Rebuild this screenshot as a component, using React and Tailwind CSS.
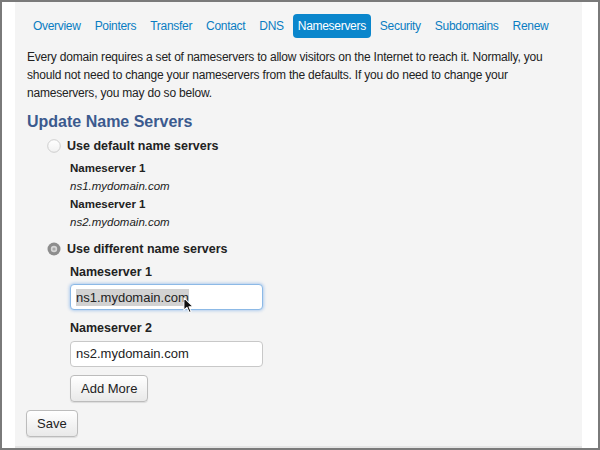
import { useState } from "react";

const tabs = [
  "Overview",
  "Pointers",
  "Transfer",
  "Contact",
  "DNS",
  "Nameservers",
  "Security",
  "Subdomains",
  "Renew",
];

const Radio = ({ checked }) =>
  checked ? (
    <svg width="14" height="14" viewBox="0 0 14 14">
      <circle cx="7" cy="7" r="6.5" fill="#8d8d8d" />
      <circle cx="7" cy="7" r="3.2" fill="#d6d6d6" />
      <circle cx="7" cy="7" r="1.6" fill="#a9a9a9" />
    </svg>
  ) : (
    <svg width="14" height="14" viewBox="0 0 14 14">
      <defs>
        <linearGradient id="rg" x1="0" y1="0" x2="0" y2="1">
          <stop offset="0" stopColor="#ffffff" />
          <stop offset="1" stopColor="#f1f1f1" />
        </linearGradient>
      </defs>
      <circle cx="7" cy="7" r="6.3" fill="url(#rg)" stroke="#c4c4c4" strokeWidth="0.8" />
    </svg>
  );

// mouse pointer drawn over the first input
const Cursor = () => (
  <svg width="12" height="17" viewBox="0 0 14 20">
    <path
      d="M1 1 L1 15.5 L4.6 12.2 L7.3 18.3 L9.6 17.3 L7 11.4 L11.8 11.4 Z"
      fill="#111"
      stroke="#fff"
      strokeWidth="1.2"
      strokeLinejoin="round"
    />
  </svg>
);

const App = () => {
  const [active] = useState("Nameservers");

  return (
    <div
      className="w-[600px] h-[450px] border-2 border-[#7a7a7a] bg-white pl-[13px] pr-[16px] text-[#222]"
      style={{ fontFamily: '"Liberation Sans", Arial, sans-serif' }}
    >
      <div className="h-full bg-[#f4f4f4] border-b-2 border-[#e4e4e4] pl-3 pt-3">
        {/* tabs */}
        <nav className="flex gap-[4px] pl-px">
          {tabs.map((t) => (
            <a
              key={t}
              className={
                t === active
                  ? "h-[24px] px-[5px] flex items-center rounded-[4px] bg-[#0a86cc] text-white text-[12px] tracking-[-0.3px]"
                  : "h-[24px] px-[5px] flex items-center text-[#0a7dc2] text-[12px] tracking-[-0.3px]"
              }
            >
              {t}
            </a>
          ))}
        </nav>

        <p className="mt-[10px] w-[550px] text-[12px] tracking-[-0.2px] leading-[18px]">
          Every domain requires a set of nameservers to allow visitors on the
          Internet to reach it. Normally, you should not need to change your
          nameservers from the defaults. If you do need to change your
          nameservers, you may do so below.
        </p>

        <h2 className="mt-[9px] text-[16px] leading-[22px] font-bold text-[#3b5a8e]">
          Update Name Servers
        </h2>

        <div className="mt-[3px] pl-[20px]">
          <label className="flex items-center gap-[6px] h-[20px]">
            <Radio />
            <span className="text-[12.5px] font-bold">Use default name servers</span>
          </label>
          <div className="pl-[23px] mt-[3px] text-[11.5px] leading-[18px]">
            <div className="font-bold">Nameserver 1</div>
            <div className="italic">ns1.mydomain.com</div>
            <div className="font-bold">Nameserver 1</div>
            <div className="italic">ns2.mydomain.com</div>
          </div>

          <label className="flex items-center gap-[6px] h-[20px] mt-[8px]">
            <Radio checked />
            <span className="text-[12.5px] font-bold">Use different name servers</span>
          </label>

          <div className="pl-[23px]">
            <div className="mt-[4px] text-[12.5px] font-bold leading-[18px]">Nameserver 1</div>
            <div className="relative mt-[3px] w-[193px] h-[26px] rounded-[4px] border border-[#8cb9e6] bg-white shadow-[0_0_3px_1px_rgba(100,160,230,0.45)] flex items-center px-[5px] text-[13px]">
              <span className="bg-[#d2d2d2] leading-[17px]">ns1.mydomain.com</span>
              <span className="absolute left-[112px] top-[12px]">
                <Cursor />
              </span>
            </div>

            <div className="mt-[9px] text-[12.5px] font-bold leading-[18px]">Nameserver 2</div>
            <div className="mt-[4px] w-[193px] h-[26px] rounded-[4px] border border-[#c8c8c8] bg-white flex items-center px-[5px] text-[13px]">
              ns2.mydomain.com
            </div>

            <button className="block mt-[8px] h-[27px] px-[10px] rounded-[4px] border border-[#bcbcbc] bg-gradient-to-b from-white to-[#e9e9e9] text-[13px] shadow-[0_1px_1px_rgba(0,0,0,0.1)]">
              Add More
            </button>
          </div>
        </div>

        <button className="block mt-[8px] -ml-px h-[27px] px-[10px] rounded-[4px] border border-[#bcbcbc] bg-gradient-to-b from-white to-[#e9e9e9] text-[13px] shadow-[0_1px_1px_rgba(0,0,0,0.1)]">
          Save
        </button>
      </div>
    </div>
  );
};

export default App;
